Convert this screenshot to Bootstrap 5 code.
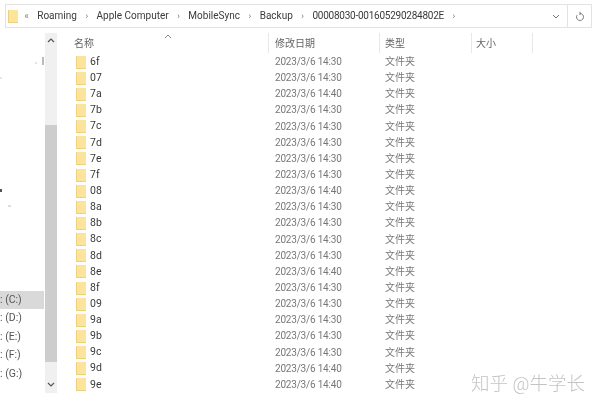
<!DOCTYPE html>
<html lang="zh">
<head>
<meta charset="utf-8">
<title>Backup</title>
<link href="https://cdn.jsdelivr.net/npm/bootstrap@5.3.0/dist/css/bootstrap.min.css" rel="stylesheet">
<style>
html,body{width:600px;height:408px;overflow:hidden;background:#fff;}
body{font-family:"Roboto","Noto Sans CJK SC",sans-serif;font-size:10px;color:#444;line-height:1;}
.winroot{width:600px;height:408px;padding:4px 8px 0 5px;filter:blur(.3px);}
.addrrow{height:24px;}
.addrbox{flex:1;border:1px solid #e3e3e3;padding:0 0 0 2px;height:24px;gap:8.5px;color:#3a3a3a;font-size:10px;}
.addr-folder{margin-right:-2px;}
.refreshbox{width:24px;height:24px;border:1px solid #e3e3e3;border-left:0;}
.crumb-sep{color:#777;font-size:9px;}
.crumb-id{letter-spacing:-.25px;}
.addr-end{margin-left:auto;margin-right:7px;}
.mainrow{margin-left:-5px;margin-top:5px;height:360px;}
.leftpane{width:45px;flex:none;}
.specks{display:block;}
.drive{height:18.4px;color:#555;font-size:10.5px;display:flex;align-items:center;}
.drive.sel{background:#d9d9d9;width:44px;}
.sbar{width:12px;flex:none;background:#f0f0f0;display:flex;flex-direction:column;}
.sbar-top{height:25px;padding-top:5px;}
.sbar-gap{height:67px;}
.sbar-thumb{height:237px;background:#cdcdcd;}
.sbar-bot{flex:1;display:flex;align-items:flex-end;justify-content:center;padding-bottom:6px;}
.listpane{flex:1;position:relative;}
.headrow{height:21px;color:#666;font-size:10px;}
.hcol{height:20px;padding-top:6px;border-right:1px solid #e8e8e8;}
.hname{width:212px;padding-left:17px;position:relative;}
.hdate{width:111px;padding-left:6px;}
.htype{width:92px;padding-left:5px;}
.hsize{width:61px;padding-left:4px;}
.caret-mark{position:absolute;left:107px;top:1px;}
.filerow{height:16.15px;display:flex;align-items:center;}
.cname{width:212px;padding-left:19px;display:flex;align-items:center;color:#3a3a3a;gap:4px;font-size:10.5px;}
.cdate{width:111px;padding-left:6px;color:#777;letter-spacing:-.2px;}
.ctype{padding-left:5px;color:#777;}
.wm{position:absolute;right:7px;bottom:0;font-size:18.5px;font-weight:300;color:#c4c4c4;}
</style>
</head>
<body>
<div class="winroot">
  <div class="d-flex addrrow">
    <div class="addrbox d-flex align-items-center">
      <svg class="addr-folder" width="10" height="13" viewBox="0 0 10 13"><rect width="10" height="13" fill="#fde49b"/><rect width="1" height="13" fill="#efd080"/><rect y="12" width="10" height="1" fill="#efd080"/></svg>
      <span class="crumb-sep">«</span><span>Roaming</span><span class="crumb-sep">›</span><span>Apple Computer</span><span class="crumb-sep">›</span><span>MobileSync</span><span class="crumb-sep">›</span><span>Backup</span><span class="crumb-sep">›</span><span class="crumb-id">00008030-001605290284802E</span><span class="crumb-sep">›</span>
      <svg class="addr-end" width="8" height="5" viewBox="0 0 8 5"><path d="M1 1l3 3 3-3" fill="none" stroke="#777" stroke-width="1"/></svg>
    </div>
    <div class="refreshbox d-flex align-items-center justify-content-center">
      <svg width="10" height="11" viewBox="0 0 10 11"><path d="M5 2.5a3.5 3.5 0 1 1-3 1.7M5 .8v3.2" fill="none" stroke="#777" stroke-width="1"/></svg>
    </div>
  </div>
  <div class="d-flex mainrow">
    <div class="leftpane">
      <svg class="specks" width="45" height="258" viewBox="0 0 45 258"><rect x="42" y="24" width="2" height="8" fill="#bbb"/><rect x="35" y="29" width="2" height="2" fill="#e4e4e4"/><rect x="0" y="156" width="2" height="3" fill="#555"/><rect x="8" y="172" width="3" height="2" fill="#ddd"/><rect x="0" y="44" width="2" height="2" fill="#e4e4e4"/></svg>
      <div class="drive sel">: (C:)</div>
      <div class="drive">: (D:)</div>
      <div class="drive">: (E:)</div>
      <div class="drive">: (F:)</div>
      <div class="drive">: (G:)</div>
    </div>
    <div class="sbar">
      <div class="sbar-top d-flex justify-content-center align-items-start"><svg width="8" height="5" viewBox="0 0 8 5"><path d="M1 4l3-3 3 3" fill="none" stroke="#555" stroke-width="1.2"/></svg></div>
      <div class="sbar-gap"></div>
      <div class="sbar-thumb"></div>
      <div class="sbar-bot"><svg width="8" height="5" viewBox="0 0 8 5"><path d="M1 1l3 3 3-3" fill="none" stroke="#555" stroke-width="1.2"/></svg></div>
    </div>
    <div class="listpane" id="list">
      <div class="d-flex headrow">
        <div class="hcol hname">名称<svg class="caret-mark" width="8" height="5" viewBox="0 0 8 5"><path d="M1 4l3-3 3 3" fill="none" stroke="#888" stroke-width="1"/></svg></div>
        <div class="hcol hdate">修改日期</div>
        <div class="hcol htype">类型</div>
        <div class="hcol hsize">大小</div>
      </div>
      <div id="rows"></div>
      <div class="wm">知乎 @牛学长</div>
    </div>
  </div>
</div>
<script>
var d=[["6f","30"],["07","30"],["7a","40"],["7b","30"],["7c","30"],["7d","30"],["7e","30"],["7f","30"],["08","40"],["8a","30"],["8b","30"],["8c","30"],["8d","30"],["8e","40"],["8f","30"],["09","30"],["9a","30"],["9b","30"],["9c","30"],["9d","40"],["9e","40"]];
document.getElementById('rows').innerHTML=d.map(function(r){
return '<div class="filerow"><div class="cname"><svg width="10" height="13" viewBox="0 0 10 13"><rect width="10" height="13" fill="#fde49b"/><rect width="1" height="13" fill="#efd080"/><rect y="12" width="10" height="1" fill="#efd080"/></svg><span>'+r[0]+'</span></div><div class="cdate">2023/3/6 14:'+r[1]+'</div><div class="ctype">文件夹</div></div>';
}).join('');
</script>
<script src="https://cdn.jsdelivr.net/npm/bootstrap@5.3.0/dist/js/bootstrap.bundle.min.js"></script>
</body>
</html>
